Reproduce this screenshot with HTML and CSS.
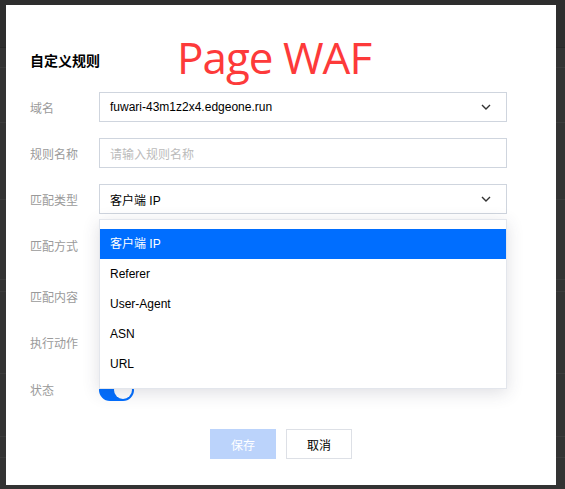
FILE: index.html
```html
<!DOCTYPE html>
<html lang="zh-CN">
<head>
<meta charset="utf-8">
<title>自定义规则</title>
<link rel="stylesheet" href="styles.css">
</head>
<body>
  <div class="page">
    <div class="page-row r1"></div>
    <div class="page-row r2"></div>
    <div class="page-row r3"></div>
    <div class="page-row r4"></div>
    <div class="page-row r5"></div>
    <div class="page-row r6"></div>
    <div class="page-row r7"></div>
    <div class="page-row r8"></div>
    <div class="page-row r9"></div>
  </div>

  <div class="modal">
    <div class="modal-head">
      <h2 class="modal-title">自定义规则</h2>
      <span class="brand">Page WAF</span>
    </div>

    <div class="form">
      <div class="form-row">
        <label class="form-label">域名</label>
        <div class="select">
          <span class="select-value">fuwari-43m1z2x4.edgeone.run</span>
          <svg class="chevron" viewBox="0 0 10 6" width="10" height="6"><path d="M1 1l4 4 4-4" fill="none" stroke="#333" stroke-width="1.4"/></svg>
        </div>
      </div>

      <div class="form-row">
        <label class="form-label">规则名称</label>
        <div class="input"><span class="placeholder">请输入规则名称</span></div>
      </div>

      <div class="form-row">
        <label class="form-label">匹配类型</label>
        <div class="select">
          <span class="select-value">客户端 IP</span>
          <svg class="chevron" viewBox="0 0 10 6" width="10" height="6"><path d="M1 1l4 4 4-4" fill="none" stroke="#333" stroke-width="1.4"/></svg>
        </div>
      </div>

      <div class="form-row gap-21">
        <label class="form-label">匹配方式</label>
      </div>

      <div class="form-row">
        <label class="form-label">匹配内容</label>
      </div>

      <div class="form-row gap-17">
        <label class="form-label">执行动作</label>
      </div>

      <div class="form-row">
        <label class="form-label">状态</label>
        <span class="switch"><span class="switch-knob"></span></span>
      </div>

      <ul class="dropdown">
        <li class="option active">客户端 IP</li>
        <li class="option">Referer</li>
        <li class="option">User-Agent</li>
        <li class="option">ASN</li>
        <li class="option">URL</li>
      </ul>
    </div>

    <div class="modal-foot">
      <button class="btn btn-primary" disabled>保存</button>
      <button class="btn">取消</button>
    </div>
  </div>
</body>
</html>
```

FILE: styles.css
```css
* { box-sizing: border-box; }

html, body {
  margin: 0;
  padding: 0;
  height: 100%;
}

body {
  background: #333333;
  font-family: "Liberation Sans", "Noto Sans CJK SC", sans-serif;
  font-size: 12px;
  color: #000;
  overflow: hidden;
  position: relative;
}

/* dimmed page behind the dialog */
.page {
  display: flex;
  flex-direction: column;
}
.page-row { border-bottom: 1px solid #3c3c3c; }
.r1 { height: 48px; background: #2e2e2e; border-bottom-color: #282828; }
.r2 { height: 20px; }
.r3 { height: 55px; }
.r4 { height: 77px; }
.r5 { height: 80px; }
.r6 { height: 12px; }
.r7 { height: 82px; }
.r8 { height: 63px; }
.r9 { height: 21px; }

.modal {
  position: absolute;
  left: 6px;
  top: 5px;
  width: 550px;
  height: 480px;
  background: #fff;
  padding: 0 24px;
}

.modal-head {
  display: flex;
  align-items: flex-end;
  height: 76px;
  padding-bottom: 11px;
}
.modal-title {
  margin: 0;
  font-size: 14px;
  font-weight: 700;
  line-height: 20px;
  font-family: "Noto Sans CJK SC", sans-serif;
}
.brand {
  margin-left: 77px;
  margin-bottom: -13px;
  font-family: "Open Sans", "Noto Sans", sans-serif;
  font-size: 44px;
  line-height: 52px;
  color: #fd3a3a;
  letter-spacing: -1px;
}

.form {
  position: relative;
  padding-top: 11px;
}
.form-row {
  display: flex;
  align-items: center;
  height: 30px;
  margin-bottom: 16px;
}
.form-row.gap-21 { margin-bottom: 21px; }
.form-row.gap-17 { margin-bottom: 17px; }
.form-label {
  width: 69px;
  flex: none;
  color: #9a9a9a;
  font-family: "Noto Sans CJK SC", sans-serif;
  font-size: 12px;
}

.select, .input {
  width: 408px;
  height: 30px;
  border: 1px solid #cfd5de;
  display: flex;
  align-items: center;
  padding: 0 10px;
}
.select-value { flex: 1; }
.chevron { margin-right: 5px; }
.placeholder {
  color: #bbb;
  font-family: "Noto Sans CJK SC", sans-serif;
}

.switch {
  position: relative;
  width: 35px;
  height: 22px;
  border-radius: 11px;
  background: #006eff;
  margin-top: 2px;
}
.switch-knob {
  position: absolute;
  right: 2px;
  top: 2px;
  width: 18px;
  height: 18px;
  border-radius: 50%;
  background: #fff;
}

.dropdown {
  position: absolute;
  left: 69px;
  top: 138px;
  width: 408px;
  margin: 0;
  padding: 9px 0;
  list-style: none;
  background: #fff;
  border: 1px solid #e3e6ec;
  box-shadow: 0 4px 16px rgba(54, 58, 80, 0.16);
}
.option {
  height: 30px;
  line-height: 30px;
  padding: 0 10px;
  font-size: 12px;
}
.option.active {
  background: #006eff;
  color: #fff;
}

.modal-foot {
  display: flex;
  justify-content: center;
  gap: 10px;
  margin-top: 25px;
}
.btn {
  width: 66px;
  height: 30px;
  border: 1px solid #dde0e6;
  background: #fff;
  font-family: "Noto Sans CJK SC", sans-serif;
  font-size: 12px;
  color: #000;
  padding: 0;
}
.btn-primary {
  background: #bbd3fb;
  border-color: #bbd3fb;
  color: #fff;
}
```
